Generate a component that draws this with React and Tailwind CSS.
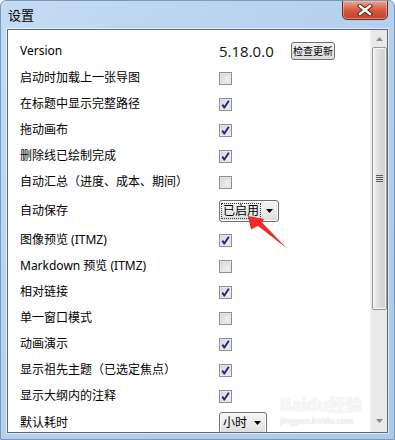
import React from "react";

const rows = [
  { label: "启动时加载上一张导图", checked: false },
  { label: "在标题中显示完整路径", checked: true },
  { label: "拖动画布", checked: true },
  { label: "删除线已绘制完成", checked: true },
  { label: "自动汇总（进度、成本、期间）", checked: false },
  { label: "自动保存", select: "已启用", focus: true, tall: true },
  { label: "图像预览 (ITMZ)", checked: true },
  { label: "Markdown 预览 (ITMZ)", checked: false },
  { label: "相对链接", checked: true },
  { label: "单一窗口模式", checked: false },
  { label: "动画演示", checked: true },
  { label: "显示祖先主题（已选定焦点）", checked: true },
  { label: "显示大纲内的注释", checked: true },
  { label: "默认耗时", select: "小时", last: true },
];

function Checkbox({ checked }) {
  return (
    <svg width="13" height="13" viewBox="0 0 13 13" className="block">
      <defs>
        <linearGradient id="cbg" x1="0" y1="0" x2="1" y2="1">
          <stop offset="0" stopColor="#d5d8dc" />
          <stop offset="1" stopColor="#f7f7f7" />
        </linearGradient>
      </defs>
      <rect x="0.5" y="0.5" width="12" height="12" fill="#f4f4f4" stroke="#8e8f8f" />
      <rect x="2" y="2" width="9" height="9" fill="url(#cbg)" stroke="#c9ccd0" strokeWidth="0.6" />
      {checked && (
        <path d="M3.3 6.6 L5.4 9.6 L9.8 2.8" fill="none" stroke="#22248a" strokeWidth="1.9" strokeLinejoin="round" />
      )}
    </svg>
  );
}

function Select({ value, focus, width }) {
  return (
    <div
      className={`flex items-center h-[22px] ${width} rounded-[3px] border border-[#707070] bg-gradient-to-b from-[#f4f4f4] via-[#ececec] to-[#dcdcdc] pl-[2px] pr-[5px] justify-between shadow-[inset_0_0_0_1px_#fcfcfc]`}
    >
      <span
        className={`text-[12px] leading-[14px] px-[1px] text-black ${focus ? "outline outline-1 outline-dotted outline-[#333]" : ""}`}
      >
        {value}
      </span>
      <svg width="7" height="4" viewBox="0 0 7 4" className="block">
        <path d="M0 0 H7 L3.5 4 Z" fill="#000" />
      </svg>
    </div>
  );
}

function Row({ r }) {
  const h = r.tall ? "h-[32px]" : r.last ? "h-[28px]" : "h-[26px]";
  return (
    <div className={`flex items-center ${h}`}>
      <div className="w-[211px] pl-[12px] text-[12px] text-black whitespace-nowrap">{r.label}</div>
      {r.select ? (
        <Select value={r.select} focus={r.focus} width={r.focus ? "w-[60px]" : "w-[48px]"} />
      ) : (
        <Checkbox checked={r.checked} />
      )}
    </div>
  );
}

export default function App() {
  return (
    <div className="relative w-[395px] h-[440px] overflow-hidden bg-gradient-to-br from-[#c4dcf3] via-[#b3d0ee] to-[#a9caec] font-['Noto_Sans','Noto_Sans_CJK_SC',sans-serif] border border-[#7d99b8] rounded-t-[6px]">
      {/* title bar */}
      <div className="flex h-[28px] items-start justify-between">
        <div className="pl-[7px] pt-[6px] text-[13px] leading-[16px] text-black">设置</div>
        <div className="mr-[6px] mt-[-1px] w-[46px] h-[20px] rounded-b-[5px] border border-[#6e2a1e] bg-gradient-to-b from-[#e9a594] via-[#d4593f] to-[#c0422b] flex items-center justify-center shadow-[inset_0_0_0_1px_rgba(255,200,190,0.5)]">
          <svg width="16" height="12" viewBox="0 0 16 12" className="block">
            <path d="M3 2 L13 10 M13 2 L3 10" stroke="#4a1d16" strokeWidth="4.2" strokeLinecap="square" />
            <path d="M3 2 L13 10 M13 2 L3 10" stroke="#ffffff" strokeWidth="2.4" strokeLinecap="square" />
          </svg>
        </div>
      </div>

      {/* client area */}
      <div className="ml-[6px] w-[381px] h-[404px] border border-[#5c6873] bg-white flex shadow-[0_0_0_1px_rgba(255,255,255,0.6)]">
        <div className="relative flex-1 h-full overflow-hidden">
          <div className="pt-[6px]">
            <div className="flex items-center h-[29px]">
              <div className="w-[211px] pl-[12px] text-[12px] text-black">Version</div>
              <div className="w-[72px] font-['Open_Sans',sans-serif] text-[15px] leading-[18px] font-normal text-[#111]">5.18.0.0</div>
              <button className="h-[18px] w-[44px] rounded-[3px] border border-[#707070] bg-gradient-to-b from-[#f4f4f4] to-[#dddddd] text-[10px] leading-[14px] text-black px-0">
                检查更新
              </button>
            </div>
            {rows.map((r, i) => (
              <Row key={i} r={r} />
            ))}
          </div>

          {/* watermark */}
          <div className="absolute left-[272px] top-[366px] flex flex-col items-start gap-[2px] opacity-50 pointer-events-none">
            <div className="text-[17px] leading-[18px] font-bold text-[#f0f0f0] [text-shadow:0_0_1px_#bbb]">
              Baidu经验
            </div>
            <div className="text-[8px] leading-[9px] font-bold text-[#e6e6e6] [text-shadow:0_0_1px_#bbb]">jingyan.baidu.com</div>
          </div>

          {/* red arrow */}
          <svg className="absolute left-0 top-0 pointer-events-none" width="370" height="300" viewBox="0 0 370 300">
            <polygon
              points="240,186 243,199.5 250,196 279,218.5 254,192.5 256,189"
              fill="#ef2b2b"
            />
          </svg>
        </div>

        {/* scrollbar */}
        <div className="w-[17px] h-full bg-[#e9e9e9] border-l border-[#f2f2f2] flex flex-col items-center">
          <div className="h-[17px] flex items-center justify-center">
            <svg width="7" height="4" viewBox="0 0 7 4" className="block">
              <path d="M0 4 H7 L3.5 0 Z" fill="#8a8a8a" />
            </svg>
          </div>
          <div className="w-[15px] h-[263px] rounded-[2px] border border-[#979797] bg-gradient-to-r from-[#efefef] via-[#dcdcdc] to-[#cfcfcf] flex items-center justify-center shadow-[inset_0_0_0_1px_#f8f8f8]">
            <div className="flex flex-col gap-[1px]">
              <div className="w-[7px] h-[1px] bg-[#5a5a5a]" />
              <div className="w-[7px] h-[1px] bg-[#5a5a5a]" />
              <div className="w-[7px] h-[1px] bg-[#5a5a5a]" />
              <div className="w-[7px] h-[1px] bg-[#5a5a5a]" />
            </div>
          </div>
          <div className="flex-1" />
          <div className="h-[17px] flex items-center justify-center mb-[3px]">
            <svg width="7" height="4" viewBox="0 0 7 4" className="block">
              <path d="M0 0 H7 L3.5 4 Z" fill="#8a8a8a" />
            </svg>
          </div>
        </div>
      </div>
    </div>
  );
}
